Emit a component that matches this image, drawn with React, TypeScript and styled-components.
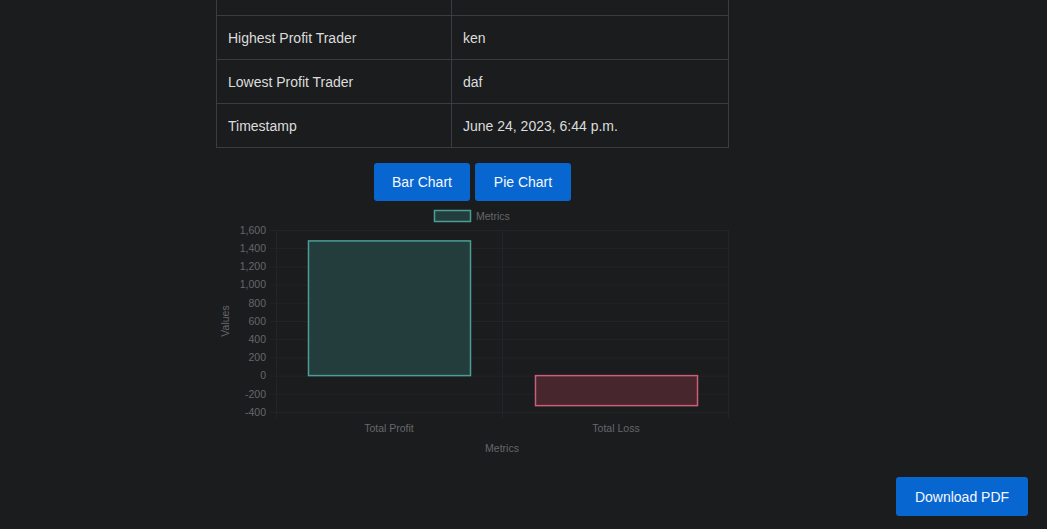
import React from "react";
import styled, { createGlobalStyle } from "styled-components";

const GlobalStyle = createGlobalStyle`
  html, body {
    margin: 0;
    padding: 0;
    background: #1b1c1e;
    font-family: "Liberation Sans", Arial, sans-serif;
    overflow: hidden;
  }
`;

const Page = styled.div`
  width: 1047px;
  height: 529px;
  overflow: hidden;
  position: relative;
  background: #1b1c1e;
`;

const Column = styled.main`
  width: 513px;
  margin: -29px 0 0 216px;
  display: flex;
  flex-direction: column;
  align-items: center;
`;

const Table = styled.table`
  width: 513px;
  border-collapse: collapse;
  color: #dcdcdc;
  font-size: 14px;
`;

const Cell = styled.td<{ $w?: number }>`
  border: 1px solid #3b3c40;
  height: 44px;
  padding: 0 11px;
  box-sizing: border-box;
  width: ${(p) => (p.$w ? `${p.$w}px` : "auto")};
  vertical-align: middle;
`;

const ButtonRow = styled.div`
  display: flex;
  gap: 5px;
  margin-top: 15px;
`;

const Button = styled.button`
  background: #0866d0;
  color: #f4f8ff;
  border: none;
  border-radius: 3px;
  font-family: "Liberation Sans", Arial, sans-serif;
  font-size: 14px;
  height: 38px;
  width: 96px;
  padding: 0;
  cursor: pointer;
`;

const ChartWrap = styled.div`
  margin-top: 5px;
  width: 513px;
  height: 254px;
`;

const DownloadButton = styled(Button)`
  position: fixed;
  right: 19px;
  bottom: 13px;
  width: 132px;
  height: 39px;
`;

const rows: [string, string][] = [
  ["", ""],
  ["Highest Profit Trader", "ken"],
  ["Lowest Profit Trader", "daf"],
  ["Timestamp", "June 24, 2023, 6:44 p.m."],
];

const ticks = [1600, 1400, 1200, 1000, 800, 600, 400, 200, 0, -200, -400];
const top = 24;
const bottom = 206;
const left = 60;
const right = 512;
const yOf = (v: number) => top + ((1600 - v) / 2000) * (bottom - top);
const fmt = (v: number) => v.toLocaleString("en-US");
const FONT = "Liberation Sans, Arial, sans-serif";

const BarChart: React.FC = () => {
  const grid = "#232427";
  const txt = "#66676a";
  const zero = yOf(0);
  return (
    <svg width={513} height={254} viewBox="0 0 513 254" style={{ display: "block" }}>
      <rect x={218.5} y={4.5} width={36} height={11} fill="#233d3d" stroke="#4a9e96" strokeWidth={1.5} />
      <text x={260} y={13.5} fontSize={10.5} fill={txt} fontFamily={FONT}>Metrics</text>
      {ticks.map((t) => (
        <g key={t}>
          <line x1={left - 6} x2={right} y1={yOf(t) + 0.5} y2={yOf(t) + 0.5} stroke={grid} strokeWidth={1} />
          <text x={50} y={yOf(t) + 3.8} fontSize={10.5} textAnchor="end" fill={txt} fontFamily={FONT}>
            {fmt(t)}
          </text>
        </g>
      ))}
      {[left, 286, right].map((x) => (
        <line key={x} x1={x + 0.5} x2={x + 0.5} y1={top} y2={bottom + 6} stroke={grid} strokeWidth={1} />
      ))}
      <rect x={92.5} y={yOf(1480)} width={162} height={zero - yOf(1480)} fill="#233d3d" stroke="#4a9e96" strokeWidth={1.5} />
      <rect x={319.5} y={zero} width={162} height={yOf(-330) - zero} fill="#47262e" stroke="#cc5e77" strokeWidth={1.5} />
      <text x={173} y={226} fontSize={10.5} textAnchor="middle" fill={txt} fontFamily={FONT}>Total Profit</text>
      <text x={400} y={226} fontSize={10.5} textAnchor="middle" fill={txt} fontFamily={FONT}>Total Loss</text>
      <text x={286} y={246} fontSize={10.5} textAnchor="middle" fill={txt} fontFamily={FONT}>Metrics</text>
      <text x={0} y={0} fontSize={10.5} textAnchor="middle" fill={txt} fontFamily={FONT} transform="translate(13 115) rotate(-90)">
        Values
      </text>
    </svg>
  );
};

export default function App() {
  return (
    <Page>
      <GlobalStyle />
      <Column>
        <Table>
          <tbody>
            {rows.map(([k, v], i) => (
              <tr key={i}>
                <Cell $w={235}>{k}</Cell>
                <Cell>{v}</Cell>
              </tr>
            ))}
          </tbody>
        </Table>
        <ButtonRow>
          <Button>Bar Chart</Button>
          <Button>Pie Chart</Button>
        </ButtonRow>
        <ChartWrap>
          <BarChart />
        </ChartWrap>
      </Column>
      <DownloadButton>Download PDF</DownloadButton>
    </Page>
  );
}
